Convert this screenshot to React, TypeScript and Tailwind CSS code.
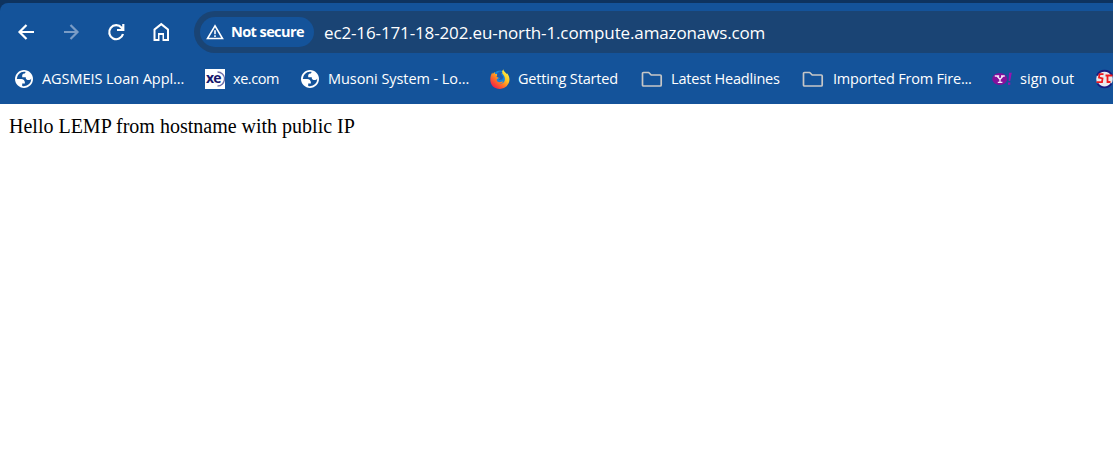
import type { ReactNode } from "react";

const Globe = () => (
  <svg width="18" height="18" viewBox="80 -880 800 800" fill="#fff">
    <path d="M480-80q-83 0-156-31.500T197-197q-54-54-85.500-127T80-480q0-83 31.500-156T197-763q54-54 127-85.500T480-880q83 0 156 31.500T763-763q54 54 85.500 127T880-480q0 83-31.500 156T763-197q-54 54-127 85.500T480-80Zm0-80q134 0 227-93t93-227q0-7-.5-14.500T799-507q-5 29-27 48t-52 19h-80q-33 0-56.500-23.500T560-520v-40H400v-80q0-33 23.500-56.500T480-720h40q0-23 12.500-40.500T563-789q-20-5-40.500-8t-42.500-3q-134 0-227 93t-93 227h200q66 0 113 47t47 113v40H400v110q20 5 39.500 7.500T480-160Z" />
  </svg>
);

const Folder = () => (
  <svg width="22" height="17" viewBox="0 0 22 17" fill="none" stroke="#c7c7c7" strokeWidth="1.700" strokeLinejoin="round">
    <path d="M2.500 1.500h5.200l2.500 2.500h9q1 0 1 1v9q0 1-1 1H2.500q-1 0-1-1V2.500q0-1 1-1Z" />
  </svg>
);

const Xe = () => (
  <div className="relative flex h-5 w-5 items-center justify-start bg-white pl-px">
    <svg className="absolute inset-0" width="20" height="20" viewBox="0 0 20 20">
      <path d="M12.500 3a7 7 0 0 1 0 14" fill="none" stroke="#6f6fa8" strokeWidth="1.300" />
    </svg>
    <span className="relative -top-px text-[14px] font-bold leading-5 tracking-[-0.800px] text-[#17176c]">xe</span>
  </div>
);

const Firefox = () => (
  <svg width="20" height="20" viewBox="0 0 20 20">
    <defs>
      <linearGradient id="fox" x1="0.850" y1="0.100" x2="0.200" y2="0.900">
        <stop offset="0" stopColor="#fff14a" />
        <stop offset="0.350" stopColor="#ffc421" />
        <stop offset="0.650" stopColor="#ff7526" />
        <stop offset="1" stopColor="#f52547" />
      </linearGradient>
    </defs>
    <circle cx="10" cy="9" r="7.500" fill="#1685dc" />
    <path d="M13.300.2c.1 1.600 1.100 2.300 2 3.300.3.300.7.800 1 1.300l1-.4c1.500 2 2.200 4 2.200 6.300A9.600 9.600 0 0 1 10 20C4.300 20 .4 16 .3 10.700.2 8 1 5.500 2.300 3.500l.5 1.600L4.500 3l.7 2c1 0 2.100.1 3 .6-.5.800-1.700 1.500-1.800 2.400l2.300.5c.2.800-1.800 1.200-2 2-.1 2 1.800 3.100 3.800 2.600 1.200-.3 1.900-.7 2.700-.5-.8 1.500-2.300 2-3.800 1.900 3.300.8 5.700-1.400 5.500-4.500 0-2.200-1-3.600-2.200-5C11.600 3.600 12 1.600 13.300.2Z" fill="url(#fox)" />
    <path d="M7 4.700 9.500 2.500l3 .5-1.500 2 2.300 3-1 2.500-3.600.4 1.500-2-3-.9Z" fill="#245bab" />
  </svg>
);

const Yahoo = () => (
  <svg width="20" height="14" viewBox="0 0 20 14">
    <ellipse cx="7.700" cy="7" rx="7.500" ry="6" fill="#85109b" />
    <path d="M2.800 4h4.400M9 4h3.800M5 4l3 3.400L11 4M8 7v3.500M5.800 10.300h4.600" stroke="#f7e9fa" strokeWidth="1.300" fill="none" />
    <path d="M17 .8h2.800l-1.600 8.200h-1.600ZM16 10.500h2.300v2.300H16Z" fill="#9a12b0" />
  </svg>
);

const Sphere = () => (
  <svg width="19" height="20" viewBox="0 0 19 20" className="shrink-0">
    <circle cx="9.500" cy="10" r="8.300" fill="#e8e8ec" />
    <path d="M2 6.500a8.300 8.300 0 0 1 15 0M2.500 14.500a8.300 8.300 0 0 0 14 0" fill="none" stroke="#171c80" strokeWidth="1.900" />
    <path d="M8.500 5.200H4.500L4 8.500 7.500 9.500 7 13.200H1.500M10.500 6.500H17.500M12.500 7v6h3" fill="none" stroke="#f0181c" strokeWidth="1.800" />
  </svg>
);

function Bookmark({ icon, width, textWidth, label, track }: { icon: ReactNode; width: string; textWidth: string; label: string; track: string }) {
  return (
    <div className={`flex shrink-0 items-center ${width}`}>
      <div className={`flex shrink-0 items-center ${textWidth}`}>{icon}</div>
      <span className={`whitespace-nowrap text-[14.500px] leading-5 ${track}`}>{label}</span>
    </div>
  );
}

export default function App() {
  return (
    <div className="h-[458px] w-[1113px] overflow-hidden bg-white">
      <div className="h-[104px] bg-[#0e335f] pt-[3px] font-['Open_Sans',sans-serif] text-white">
        <div className="h-[101px] overflow-hidden rounded-tl-[8px] bg-[#14539a] pt-2">
          <div className="flex h-[42px] items-center">
            <div className="flex w-[194px] shrink-0 items-center gap-[21px] pl-[14px]">
              <svg width="24" height="24" viewBox="0 0 24 24" fill="none" stroke="#fff" strokeWidth="2.200"><path d="M20 12H6M12.500 5l-7 7 7 7" /></svg>
              <svg width="24" height="24" viewBox="0 0 24 24" fill="none" stroke="#7a9cc6" strokeWidth="2.200"><path d="M5 12h14M11.500 5l7 7-7 7" /></svg>
              <svg width="24" height="24" viewBox="0 0 24 24" fill="none" stroke="#fff" strokeWidth="2.200"><path d="M19 14a7 7 0 1 1-1.400-6.300L19 9.500M19.300 4v6H13" /></svg>
              <svg width="24" height="24" viewBox="0 0 24 24" fill="#fff"><path d="M6.500 19h2.500v-6h6v6h3v-9l-5.750-4.500L6.500 10v9ZM4.500 21V9l7.750-6.200L20 9v12h-6.500v-6h-3v6H4.500Z" /></svg>
            </div>
            <div className="flex h-[42px] flex-1 items-center rounded-l-full bg-[#1a4474] pl-[6px]">
              <div className="flex h-[30px] w-[114px] shrink-0 items-center rounded-full bg-[#14539a] pl-[6px]">
                <svg width="18" height="16" viewBox="0 0 18 16" fill="none" stroke="#fff" strokeWidth="1.600"><path d="M9 1.800 1.500 14.500h15ZM9 6.300v4M9 11.300v1.700" /></svg>
                <span className="ml-[7px] whitespace-nowrap text-[14.500px] font-bold leading-5 tracking-[-0.580px]">Not secure</span>
              </div>
              <span className="ml-[10px] whitespace-nowrap pt-[2px] text-[17px] leading-6 tracking-[-0.130px]">ec2-16-171-18-202.eu-north-1.compute.amazonaws.com</span>
            </div>
          </div>
          <div className="flex h-[52px] items-center pl-[15px]">
            <Bookmark icon={<Globe />} width="w-[190px]" textWidth="w-[27px]" track="tracking-[-0.060px]" label="AGSMEIS Loan Appl..." />
            <Bookmark icon={<Xe />} width="w-[96px]" textWidth="w-[28px]" track="tracking-[-0.450px]" label="xe.com" />
            <Bookmark icon={<Globe />} width="w-[189px]" textWidth="w-[27px]" track="tracking-[-0.070px]" label="Musoni System - Lo..." />
            <Bookmark icon={<Firefox />} width="w-[151px]" textWidth="w-[28px]" track="tracking-[-0.170px]" label="Getting Started" />
            <Bookmark icon={<Folder />} width="w-[161px]" textWidth="w-[30px]" track="tracking-[-0.190px]" label="Latest Headlines" />
            <Bookmark icon={<Folder />} width="w-[190px]" textWidth="w-[31px]" track="tracking-[-0.200px]" label="Imported From Fire..." />
            <Bookmark icon={<Yahoo />} width="w-[103px]" textWidth="w-[28px]" track="tracking-[0.050px]" label="sign out" />
            <Sphere />
          </div>
        </div>
      </div>
      <p className="pl-[9px] pt-[11px] font-['Liberation_Serif',serif] text-[20px] leading-[23px] text-black">Hello LEMP from hostname with public IP</p>
    </div>
  );
}
